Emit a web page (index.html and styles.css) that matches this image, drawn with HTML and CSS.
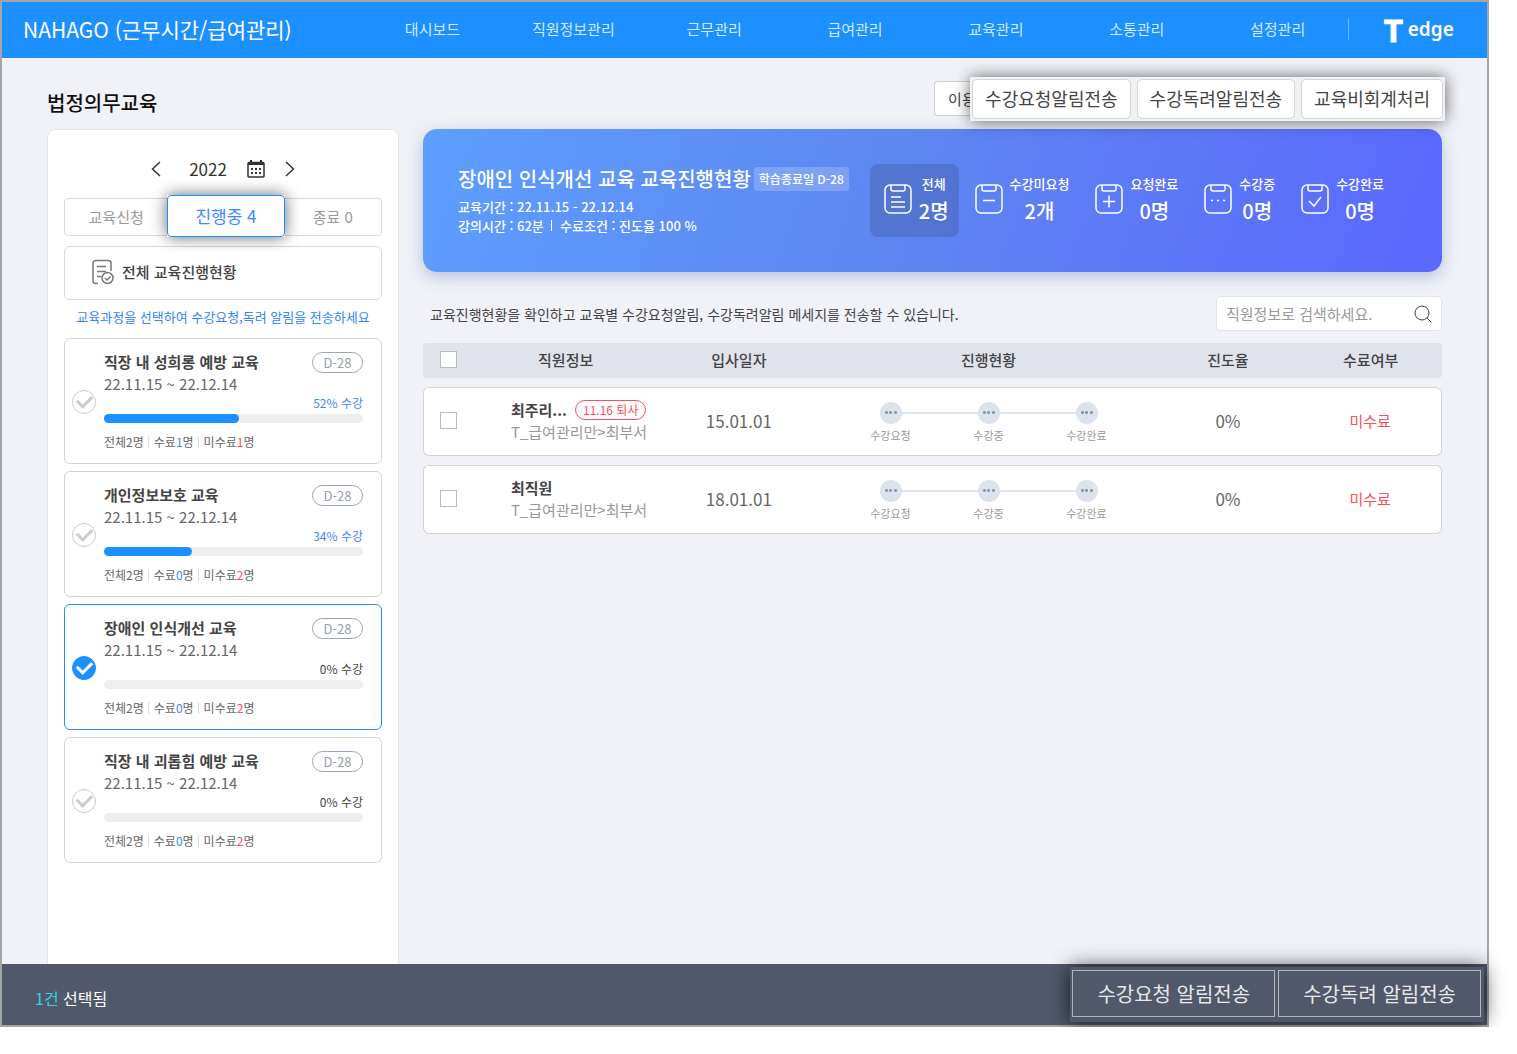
FILE: index.html
```html
<!DOCTYPE html>
<html lang="ko">
  <head>
    <meta charset="utf-8">
    <title>법정의무교육 - NAHAGO</title>
    <link rel="stylesheet" href="styles.css">
  </head>
  <body>
    <div class="app">
      <header class="topbar">
        <h1 class="brand">NAHAGO (근무시간/급여관리)</h1>
        <nav class="menu">
          <a href="#">대시보드</a>
          <a href="#">직원정보관리</a>
          <a href="#">근무관리</a>
          <a href="#">급여관리</a>
          <a href="#">교육관리</a>
          <a href="#">소통관리</a>
          <a href="#">설정관리</a>
        </nav>
        <a class="logo" href="#"><span class="logo-t">T</span><span>edge</span></a>
      </header>

      <div class="content">
        <div class="page-head">
          <h2>법정의무교육</h2>
          <button type="button" class="btn-guide">이용</button>
          <div class="head-actions">
            <button type="button">수강요청알림전송</button>
            <button type="button">수강독려알림전송</button>
            <button type="button">교육비회계처리</button>
          </div>
        </div>

        <div class="columns">
          <aside class="sidebar">
            <div class="year">
              <button type="button" class="prev" aria-label="이전 연도">
                <svg width="10" height="16" viewBox="0 0 10 16"><path d="M9 1 1.500 8 9 15" /></svg>
              </button>
              <span>2022</span>
              <button type="button" aria-label="달력">
                <svg width="18" height="18" viewBox="0 0 18 18">
                  <rect x="1" y="2.500" width="16" height="14.500" rx="1" />
                  <path class="fill" d="M1 2h16v3H1zM3 0h2v3H3zM13 0h2v3h-2z" />
                  <path class="fill" d="M4 8h2v2H4zM8 8h2v2H8zM12 8h2v2h-2zM4 12h2v2H4zM8 12h2v2H8zM12 12h2v2h-2z" />
                </svg>
              </button>
              <button type="button" aria-label="다음 연도">
                <svg width="10" height="16" viewBox="0 0 10 16"><path d="M1 1 8.500 8 1 15" /></svg>
              </button>
            </div>

            <div class="tabs">
              <button type="button">교육신청</button>
              <div class="tab-current"><button type="button">진행중 4</button></div>
              <button type="button">종료 0</button>
            </div>

            <button type="button" class="all-status">
              <svg width="24" height="26" viewBox="0 0 24 26">
                <path d="M20 12V4a2.500 2.500 0 0 0-2.500-2.500h-13A2.500 2.500 0 0 0 2 4v18a2.500 2.500 0 0 0 2.500 2.500H7M6 7.500h9M6 12.500h9M6 17.500h4" />
                <circle cx="16.500" cy="19" r="5.500" />
                <path d="m14 19 2 2 3.500-3.500" />
              </svg>
              전체 교육진행현황
            </button>

            <p class="hint">교육과정을 선택하여 수강요청,독려 알림을 전송하세요</p>

            <div class="courses">
              <label class="course">
                <input type="checkbox">
                <span class="course-body">
                  <span class="course-top"><strong>직장 내 성희롱 예방 교육</strong><em>D-28</em></span>
                  <span class="period">22.11.15 ~ 22.12.14</span>
                  <span class="rate on">52% 수강</span>
                  <span class="bar"><span style="width: 52%"></span></span>
                  <span class="counts"><span>전체2명</span><span>수료<b class="blue">1</b>명</span><span>미수료<b class="red">1</b>명</span></span>
                </span>
              </label>
              <label class="course">
                <input type="checkbox">
                <span class="course-body">
                  <span class="course-top"><strong>개인정보보호 교육</strong><em>D-28</em></span>
                  <span class="period">22.11.15 ~ 22.12.14</span>
                  <span class="rate on">34% 수강</span>
                  <span class="bar"><span style="width: 34%"></span></span>
                  <span class="counts"><span>전체2명</span><span>수료<b class="blue">0</b>명</span><span>미수료<b class="red">2</b>명</span></span>
                </span>
              </label>
              <label class="course selected">
                <input type="checkbox" checked>
                <span class="course-body">
                  <span class="course-top"><strong>장애인 인식개선 교육</strong><em>D-28</em></span>
                  <span class="period">22.11.15 ~ 22.12.14</span>
                  <span class="rate">0% 수강</span>
                  <span class="bar"><span style="width: 0%"></span></span>
                  <span class="counts"><span>전체2명</span><span>수료<b class="blue">0</b>명</span><span>미수료<b class="red">2</b>명</span></span>
                </span>
              </label>
              <label class="course">
                <input type="checkbox">
                <span class="course-body">
                  <span class="course-top"><strong>직장 내 괴롭힘 예방 교육</strong><em>D-28</em></span>
                  <span class="period">22.11.15 ~ 22.12.14</span>
                  <span class="rate">0% 수강</span>
                  <span class="bar"><span style="width: 0%"></span></span>
                  <span class="counts"><span>전체2명</span><span>수료<b class="blue">0</b>명</span><span>미수료<b class="red">2</b>명</span></span>
                </span>
              </label>
            </div>
          </aside>

          <main class="main">
            <section class="banner">
              <div class="banner-info">
                <h3>장애인 인식개선 교육 교육진행현황 <span class="dday">학습종료일 D-28</span></h3>
                <p>교육기간 : 22.11.15 - 22.12.14</p>
                <p>강의시간 : 62분 <i></i> 수료조건 : 진도율 100 %</p>
              </div>
              <div class="stats">
                <button type="button" class="active">
                  <svg width="28" height="30" viewBox="0 0 28 30">
                    <rect x="1" y="1" width="26" height="28" rx="5" />
                    <path d="M7 1v4a2 2 0 0 0 2 2h10a2 2 0 0 0 2-2V1M7 13h10M7 18h14M7 23h14" />
                  </svg>
                  <span><small>전체</small>2명</span>
                </button>
                <button type="button">
                  <svg width="28" height="30" viewBox="0 0 28 30">
                    <rect x="1" y="1" width="26" height="28" rx="5" />
                    <path d="M7 1v4a2 2 0 0 0 2 2h10a2 2 0 0 0 2-2V1M8 16.500h12" />
                  </svg>
                  <span><small>수강미요청</small>2개</span>
                </button>
                <button type="button">
                  <svg width="28" height="30" viewBox="0 0 28 30">
                    <rect x="1" y="1" width="26" height="28" rx="5" />
                    <path d="M7 1v4a2 2 0 0 0 2 2h10a2 2 0 0 0 2-2V1M8 17.500h12M14 11.500v12" />
                  </svg>
                  <span><small>요청완료</small>0명</span>
                </button>
                <button type="button">
                  <svg width="28" height="30" viewBox="0 0 28 30">
                    <rect x="1" y="1" width="26" height="28" rx="5" />
                    <path d="M7 1v4a2 2 0 0 0 2 2h10a2 2 0 0 0 2-2V1M7 16.500h2M13 16.500h2M19 16.500h2" />
                  </svg>
                  <span><small>수강중</small>0명</span>
                </button>
                <button type="button">
                  <svg width="28" height="30" viewBox="0 0 28 30">
                    <rect x="1" y="1" width="26" height="28" rx="5" />
                    <path d="M7 1v4a2 2 0 0 0 2 2h10a2 2 0 0 0 2-2V1M8 17l5 5 7-9" />
                  </svg>
                  <span><small>수강완료</small>0명</span>
                </button>
              </div>
            </section>

            <div class="toolbar">
              <p>교육진행현황을 확인하고 교육별 수강요청알림, 수강독려알림 메세지를 전송할 수 있습니다.</p>
              <form class="search">
                <input type="text" placeholder="직원정보로 검색하세요." aria-label="직원 검색">
                <button type="submit" aria-label="검색">
                  <svg width="18" height="18" viewBox="0 0 18 18">
                    <circle cx="8" cy="8" r="7" />
                    <path d="m13 13 4.500 4.500" />
                  </svg>
                </button>
              </form>
            </div>

            <table class="staff">
              <thead>
                <tr>
                  <th class="col-check"><input type="checkbox" aria-label="전체 선택"></th>
                  <th class="col-info">직원정보</th>
                  <th class="col-date">입사일자</th>
                  <th class="col-step">진행현황</th>
                  <th class="col-rate">진도율</th>
                  <th>수료여부</th>
                </tr>
              </thead>
              <tbody>
                <tr>
                  <td><input type="checkbox" aria-label="최주리 선택"></td>
                  <td class="person">
                    <div class="name">최주리... <span class="leave">11.16 퇴사</span></div>
                    <div class="dept">T_급여관리만&gt;최부서</div>
                  </td>
                  <td class="num">15.01.01</td>
                  <td>
                    <ol class="steps">
                      <li><span class="track"><i></i></span>수강요청</li>
                      <li><span class="track"><i></i></span>수강중</li>
                      <li><span class="track"><i></i></span>수강완료</li>
                    </ol>
                  </td>
                  <td class="num">0%</td>
                  <td class="fail">미수료</td>
                </tr>
                <tr>
                  <td><input type="checkbox" aria-label="최직원 선택"></td>
                  <td class="person">
                    <div class="name">최직원</div>
                    <div class="dept">T_급여관리만&gt;최부서</div>
                  </td>
                  <td class="num">18.01.01</td>
                  <td>
                    <ol class="steps">
                      <li><span class="track"><i></i></span>수강요청</li>
                      <li><span class="track"><i></i></span>수강중</li>
                      <li><span class="track"><i></i></span>수강완료</li>
                    </ol>
                  </td>
                  <td class="num">0%</td>
                  <td class="fail">미수료</td>
                </tr>
              </tbody>
            </table>
          </main>
        </div>
      </div>

      <footer class="bottombar">
        <p><span>1건</span> 선택됨</p>
        <div class="bottom-actions">
          <button type="button">수강요청 알림전송</button>
          <button type="button">수강독려 알림전송</button>
        </div>
      </footer>
    </div>
  </body>
</html>
```
FILE: styles.css
```css
* {
  box-sizing: border-box;
}
body {
  margin: 0;
  background: #fff;
  color: #444;
  font-family: "Noto Sans CJK KR", "Noto Sans", sans-serif;
  font-size: 15px;
  line-height: 22px;
}
h1,
h2,
h3,
p,
ol {
  margin: 0;
  padding: 0;
}
button,
input {
  font: inherit;
  color: inherit;
}
button {
  padding: 0;
  border: 0;
  background: none;
  cursor: pointer;
}
svg {
  display: block;
  flex: none;
  fill: none;
  stroke: currentColor;
}
.app {
  display: flex;
  flex-direction: column;
  min-height: calc(100vh - 27px);
  margin-right: 28px;
  border: 2px solid #a5a5a5;
  background: #f0f2f8;
}

/* top bar */
.topbar {
  display: flex;
  align-items: center;
  height: 56px;
  padding: 0 0 2px 21px;
  background: #1c90ff;
  color: #fff;
}
.brand {
  width: 339px;
  font-size: 21px;
  font-weight: 400;
  white-space: nowrap;
}
.menu {
  display: flex;
  flex: 1;
  border-right: 1px solid #6db8ff;
}
.menu a {
  flex: 1;
  color: #d3eaff;
  text-align: center;
  text-decoration: none;
  white-space: nowrap;
}
.logo {
  display: flex;
  align-items: center;
  gap: 5px;
  width: 138px;
  padding-left: 35px;
  color: #fff;
  font-family: "Noto Sans", sans-serif;
  font-size: 19px;
  font-weight: 600;
  text-decoration: none;
}
.logo-t {
  padding-top: 2px;
  font-family: Lato, sans-serif;
  font-size: 31px;
  font-weight: 900;
  -webkit-text-stroke: 1px #fff;
}

/* page heading */
.content {
  display: flex;
  flex: 1;
  flex-direction: column;
  padding: 0 45px;
}
.page-head {
  display: flex;
  align-items: center;
  height: 71px;
  padding-top: 10px;
}
.page-head h2 {
  flex: 1;
  padding-top: 8px;
  color: #111;
  font-size: 20px;
  font-weight: 500;
}
.btn-guide {
  overflow: hidden;
  width: 36px;
  height: 35px;
  padding-left: 13px;
  border: 1px solid #d0d0d0;
  border-right: 0;
  border-radius: 4px 0 0 4px;
  background: #fff;
  text-align: left;
  white-space: nowrap;
}
.head-actions {
  display: flex;
  gap: 6px;
  position: relative;
  z-index: 1;
  margin-right: -3px;
  padding: 2px;
  background: #f0f1f5;
  box-shadow: 0 0 16px rgba(0, 0, 0, 0.6);
}
.head-actions button {
  height: 40px;
  padding: 0 12px 2px;
  border: 1px solid #d4d4d4;
  border-radius: 5px;
  background: #fff;
  font-size: 18px;
}
.columns {
  display: flex;
  flex: 1;
  gap: 24px;
}

/* sidebar */
.sidebar {
  flex: none;
  width: 352px;
  padding: 24px 16px 0;
  border: 1px solid #e5e7ed;
  border-bottom: 0;
  border-radius: 8px 8px 0 0;
  background: #fff;
}
.year {
  display: flex;
  align-items: center;
  justify-content: center;
  gap: 20px;
  height: 30px;
  color: #333;
  font-size: 17px;
}
.year svg {
  stroke-width: 1.5;
}
.year .fill {
  fill: currentColor;
  stroke: none;
}
.year .prev {
  margin-right: 8px;
}
.tabs {
  display: grid;
  grid-template-columns: 103fr 118fr 97fr;
  height: 38px;
  margin-top: 14px;
  border: 1px solid #d9d9d9;
  border-radius: 4px;
  color: #999;
}
.tab-current {
  margin: -4px 0 -2px;
  background: #fff;
  box-shadow: 0 0 16px rgba(0, 0, 0, 0.6);
}
.tab-current button {
  width: 100%;
  height: 100%;
  border: 1px solid #1c90ff;
  border-radius: 4px;
  color: #3d87ff;
  font-size: 17px;
}
.all-status {
  display: flex;
  align-items: center;
  gap: 7px;
  width: 100%;
  height: 54px;
  margin-top: 10px;
  padding: 0 0 2px 26px;
  border: 1px solid #d9d9d9;
  border-radius: 6px;
  font-weight: 500;
}
.all-status svg {
  color: #777;
  stroke-width: 1.5;
}
.hint {
  color: #2f86ff;
  font-size: 13px;
  line-height: 34px;
  text-align: center;
  white-space: nowrap;
}
.courses {
  display: flex;
  flex-direction: column;
  gap: 7px;
  padding-top: 4px;
}
.course {
  display: flex;
  align-items: center;
  gap: 8px;
  padding: 12px 18px 11px 7px;
  border: 1px solid #d4d4d4;
  border-radius: 6px;
}
.course.selected {
  border-color: #1c90ff;
}
.course input {
  display: grid;
  flex: none;
  place-content: center;
  appearance: none;
  width: 24px;
  height: 24px;
  margin: 0;
  border: 1px solid #ccc;
  border-radius: 50%;
}
.course input::before {
  content: "";
  width: 12px;
  height: 7px;
  margin-bottom: 4px;
  border: solid #ccc;
  border-width: 0 0 3px 3px;
  transform: rotate(-45deg);
}
.course input:checked {
  border-color: #1c90ff;
  background: #1c90ff;
}
.course input:checked::before {
  border-color: #fff;
}
.course-body {
  display: flex;
  flex: 1;
  flex-direction: column;
}
.course-top {
  display: flex;
  justify-content: space-between;
  align-items: center;
  height: 22px;
}
.course-top em {
  width: 51px;
  border: 1px solid #9aa5b8;
  border-radius: 11px;
  color: #9a9fae;
  font-size: 13px;
  font-style: normal;
  line-height: 19px;
  text-align: center;
}
.period {
  color: #666;
}
.rate {
  font-size: 12px;
  line-height: 16px;
  text-align: right;
}
.rate.on,
.blue {
  color: #3d87ff;
}
.bar {
  display: flex;
  height: 9px;
  margin: 3px 0 9px;
  border-radius: 5px;
  background: #eee;
}
.bar span {
  border-radius: 5px;
  background: #1c90ff;
}
.counts {
  display: flex;
  align-items: center;
  height: 20px;
  color: #666;
  font-size: 12px;
}
.counts span {
  line-height: 12px;
}
.counts span + span {
  margin-left: 4px;
  padding-left: 5px;
  border-left: 1px solid #ddd;
}
.counts b {
  font-weight: 400;
}
.red {
  color: #ff4d5a;
}

/* banner */
.main {
  flex: 1;
  min-width: 0;
}
.banner {
  display: flex;
  align-items: center;
  justify-content: space-between;
  height: 143px;
  padding: 0 48px 0 35px;
  border-radius: 14px;
  background: linear-gradient(110deg, #5c9fff, #5e87f0 45%, #5b68ff);
  box-shadow: 0 5px 16px rgba(80, 100, 170, 0.35);
  color: #fff;
}
.banner-info {
  font-size: 13px;
  font-weight: 500;
  line-height: 19px;
  white-space: nowrap;
}
.banner h3 {
  display: flex;
  align-items: center;
  gap: 3px;
  margin-bottom: 6px;
  font-size: 20px;
  font-weight: 500;
  line-height: 24px;
}
.dday {
  padding: 0 5px;
  border-radius: 3px;
  background: rgba(255, 255, 255, 0.2);
  font-size: 12px;
}
.banner-info i {
  display: inline-block;
  width: 1px;
  height: 11px;
  margin: 0 4px;
  background: #fff;
}
.stats {
  display: flex;
  gap: 2px;
}
.stats button {
  display: flex;
  align-items: center;
  gap: 7px;
  height: 73px;
  padding: 0 10px 4px 14px;
  border-radius: 8px;
  font-size: 20px;
  font-weight: 500;
  line-height: 30px;
  white-space: nowrap;
}
.stats button.active {
  background: rgba(60, 80, 140, 0.3);
}
.stats svg {
  stroke-width: 1.5;
}
.stats small {
  display: block;
  font-size: 13px;
  line-height: 24px;
}

/* search row */
.toolbar {
  display: flex;
  align-items: center;
  justify-content: space-between;
  margin: 24px 0 3px;
  padding-left: 7px;
  font-size: 14px;
}
.search {
  display: flex;
  align-items: center;
  width: 226px;
  height: 35px;
  padding: 0 9px;
  border: 1px solid #e4e6ec;
  border-radius: 4px;
  background: #fff;
  font-size: 15px;
}
.search input {
  flex: 1;
  min-width: 0;
  padding: 0;
  border: 0;
  outline: 0;
  background: none;
}
.search input::placeholder {
  color: #999;
}

/* staff table */
.staff {
  width: 100%;
  border-spacing: 0 9px;
  table-layout: fixed;
  text-align: center;
}
.staff th {
  height: 35px;
  padding: 0 0 2px;
  background: #e0e3eb;
  font-weight: 500;
}
.staff th:first-child {
  border-radius: 4px 0 0 4px;
}
.staff th:last-child {
  border-radius: 0 4px 4px 0;
}
.col-check {
  width: 5%;
}
.col-info {
  width: 18%;
}
.col-date {
  width: 16%;
}
.col-step {
  width: 33%;
}
.col-rate {
  width: 14%;
}
.staff td {
  height: 69px;
  padding: 0 0 2px;
  border: solid #d4d4d4;
  border-width: 1px 0;
  background: #fff;
}
.staff td:first-child {
  border-left-width: 1px;
  border-radius: 6px 0 0 6px;
}
.staff td:last-child {
  border-right-width: 1px;
  border-radius: 0 6px 6px 0;
}
.staff input {
  display: block;
  appearance: none;
  width: 17px;
  height: 17px;
  margin: 0 auto;
  border: 1px solid #bbb;
  background: #fff;
}
.staff .person {
  padding-left: 37px;
  text-align: left;
  white-space: nowrap;
}
.name {
  display: flex;
  align-items: center;
  gap: 8px;
  font-weight: 700;
}
.leave {
  padding: 0 7px;
  border: 1px solid #ff4d5a;
  border-radius: 10px;
  color: #ff4d5a;
  font-size: 12px;
  font-weight: 400;
  line-height: 18px;
}
.dept {
  color: #999;
}
.num {
  color: #666;
  font-size: 17px;
}
.fail {
  color: #ff4d5a;
}
.steps {
  display: flex;
  justify-content: center;
  padding-top: 6px;
  color: #999;
  font-size: 11px;
  list-style: none;
}
.steps li {
  width: 98px;
}
.track {
  display: flex;
  align-items: center;
}
.track::before,
.track::after {
  content: "";
  flex: 1;
  height: 2px;
  background: #dfe6fb;
}
.steps li:first-child .track::before,
.steps li:last-child .track::after {
  background: none;
}
.track i {
  width: 22px;
  height: 22px;
  border-radius: 50%;
  background: radial-gradient(circle, #8d95ab 1px, transparent 2px) center / 5px 5px no-repeat,
    radial-gradient(circle, #8d95ab 1px, transparent 2px) 4px center / 5px 5px no-repeat,
    radial-gradient(circle, #8d95ab 1px, transparent 2px) 13px center / 5px 5px no-repeat,
    #dde3ec;
}

/* bottom bar */
.bottombar {
  display: flex;
  align-items: center;
  justify-content: space-between;
  position: relative;
  height: 61px;
  padding: 0 3px 0 33px;
  background: #50586a;
  color: #fff;
  font-size: 16px;
}
.bottombar p {
  padding-top: 6px;
}
.bottombar p span {
  color: #2fd5e0;
}
.bottom-actions {
  display: flex;
  gap: 3px;
  padding: 3px 3px 5px 2px;
  background: #50586a;
  box-shadow: 0 0 20px rgba(0, 0, 0, 0.7);
}
.bottom-actions button {
  height: 47px;
  padding: 0 24px;
  border: 1px solid #b5b5b5;
  color: #e8e8e8;
  font-size: 20px;
}
```
